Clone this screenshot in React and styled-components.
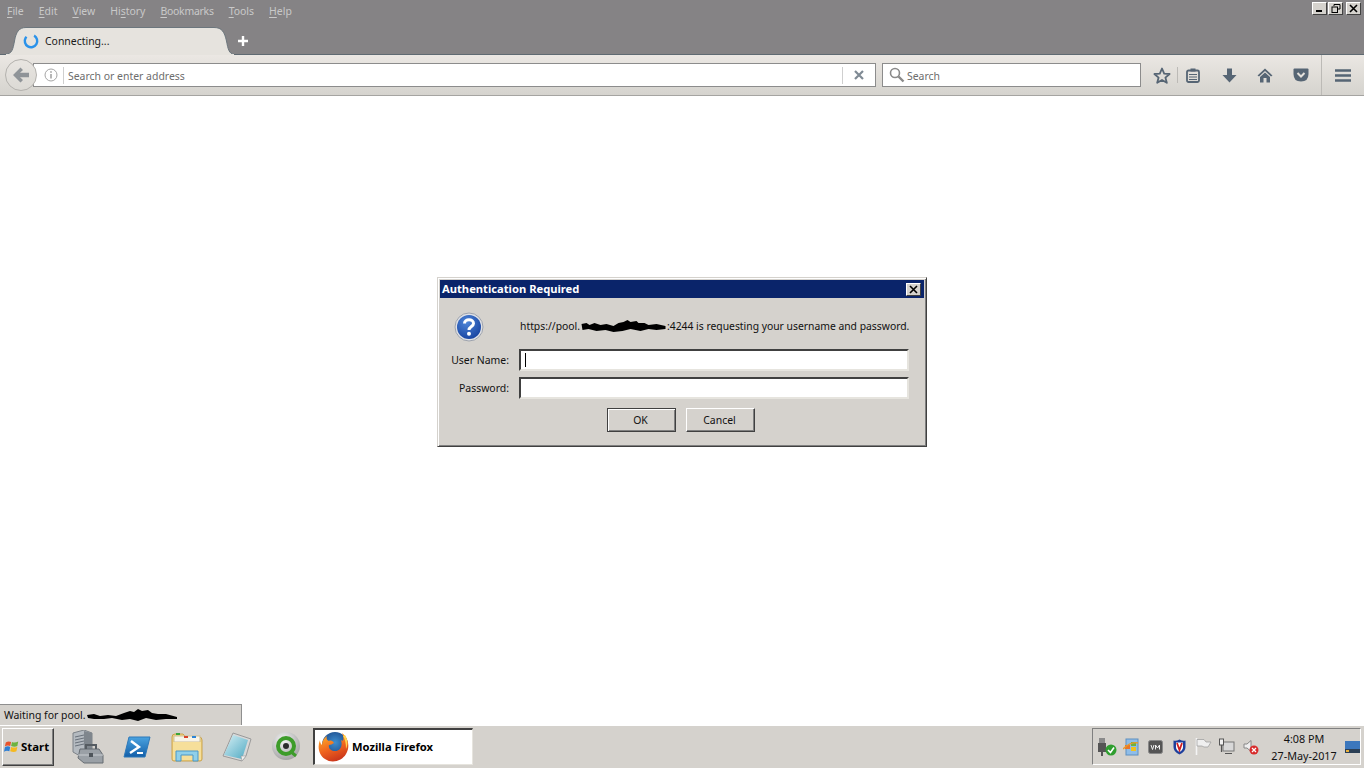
import React from 'react';
import styled, { createGlobalStyle } from 'styled-components';

const GlobalStyle = createGlobalStyle`
  html, body { margin: 0; padding: 0; background: #fff; }
  * { box-sizing: border-box; }
  body { font-family: 'Noto Sans', 'Liberation Sans', sans-serif; font-size: 10.45px; }
`;

const chrome = '#d5d2cd';

const Page = styled.div`
  width: 1364px;
  height: 768px;
  display: flex;
  flex-direction: column;
  overflow: hidden;
  position: relative;
`;

const TitleArea = styled.div`
  height: 55px;
  flex: none;
  background: #858385;
  border-bottom: 1px solid #5f6a72;
  display: flex;
  flex-direction: column;
`;

const MenuRow = styled.div`
  height: 27px;
  display: flex;
  justify-content: space-between;
  align-items: flex-start;
  padding: 0 3px 0 7px;
`;

const Menu = styled.nav`
  display: flex;
  gap: 15px;
  height: 22px;
  align-items: center;
`;

const MenuItem = styled.span`
  color: #c9c9c9;
  letter-spacing: ${p => (p.$tight ? '-0.25px' : 'normal')};
  u { text-decoration-thickness: 1px; text-underline-offset: 2px; }
`;

const WindowButtons = styled.div`
  display: flex;
  gap: 1px;
  padding-top: 2px;
`;

const WindowButton = styled.button`
  width: 15px;
  height: 13px;
  padding: 0;
  display: flex;
  align-items: center;
  justify-content: center;
  background: ${chrome};
  border: 1px solid;
  border-color: #fff #404040 #404040 #fff;
  margin-left: ${p => p.$offset || 0}px;
`;

const TabRow = styled.div`
  height: 27px;
  padding-left: 6px;
  display: flex;
  align-items: center;
`;

const Tab = styled.div`
  width: 228px;
  height: 28px;
  position: relative;
  display: flex;
  align-items: center;
  padding: 0 12px 0 17px;
  margin-bottom: -1px;
  z-index: 1;
`;

const TabShape = styled.svg`
  position: absolute;
  left: 0;
  top: 0;
`;

const TabSpinner = styled.svg`
  position: relative;
  flex: none;
`;

const TabTitle = styled.span`
  position: relative;
  flex: 1;
  margin-left: 6px;
  color: #1a1a1a;
`;

const NewTab = styled.svg`
  margin-left: 2px;
`;

const Toolbar = styled.div`
  height: 41px;
  flex: none;
  display: flex;
  align-items: center;
  background: linear-gradient(#ebe7e3, #d5d3ce);
  border-bottom: 1px solid #a5a4a1;
  padding-left: 5px;
`;

const BackButton = styled.div`
  width: 32px;
  height: 32px;
  border-radius: 50%;
  flex: none;
  display: flex;
  align-items: center;
  justify-content: center;
  background: linear-gradient(#e8e5e1, #dcdad5);
  border: 1px solid #b4b2ae;
  position: relative;
  z-index: 1;
`;

const Field = styled.div`
  height: 24px;
  background: #fff;
  border: 1px solid #8c8c8c;
  display: flex;
  align-items: center;
  flex: none;
  width: ${p => p.$width}px;
  margin-left: ${p => p.$offset}px;
`;

const Placeholder = styled.span`
  color: #6d6d6d;
  flex: 1;
  padding-top: 1px;
`;

const InfoWrap = styled.div`
  width: 30px;
  height: 17px;
  flex: none;
  padding-left: 10px;
  display: flex;
  align-items: center;
  border-right: 1px solid #cfcfcf;
  margin-right: 4px;
`;

const ClearWrap = styled.div`
  width: 33px;
  height: 17px;
  flex: none;
  display: flex;
  align-items: center;
  justify-content: center;
  border-left: 1px solid #cfcfcf;
`;

const SearchIcon = styled.svg`
  margin: 0 2px 0 6px;
  flex: none;
`;

const ToolGroup = styled.div`
  display: flex;
  align-items: center;
  gap: 6px;
  margin-left: ${p => p.$offset || 0}px;
`;

const ToolButton = styled.div`
  width: 30px;
  height: 24px;
  flex: none;
  display: flex;
  align-items: center;
  justify-content: center;
`;

const ToolSep = styled.div`
  width: 1px;
  height: ${p => p.$height}px;
  background: #bcbab6;
  flex: none;
  margin-left: ${p => p.$offset || 0}px;
`;

const BurgerButton = styled(ToolButton)`
  width: 42px;
`;

const Content = styled.main`
  flex: 1;
  background: #fff;
  padding: 181px 0 0 437px;
`;

const Dialog = styled.section`
  width: 490px;
  height: 170px;
  background: ${chrome};
  border: 1px solid;
  border-color: ${chrome} #404040 #404040 ${chrome};
  box-shadow: inset 1px 1px 0 #fff, inset -1px -1px 0 #808080;
  padding: 2px;
  display: flex;
  flex-direction: column;
`;

const DialogTitle = styled.header`
  height: 18px;
  background: #0a246a;
  color: #fff;
  font-weight: 700;
  font-size: 11.2px;
  display: flex;
  align-items: center;
  justify-content: space-between;
  padding: 0 2px 0 2px;
`;

const TitleText = styled.span`
  padding-bottom: 2px;
`;

const DialogClose = styled(WindowButton)`
  margin-right: 1px;
`;

const DialogBody = styled.div`
  flex: 1;
  display: grid;
  grid-template-columns: 69px 390px;
  grid-template-rows: 33px 22px 22px auto;
  row-gap: 6px;
  padding: 12px 0 0 10px;
  align-content: start;
`;

const MessageIcon = styled.svg`
  justify-self: start;
  align-self: center;
  margin-left: 4px;
`;

const Message = styled.p`
  margin: 0;
  padding: 0 0 2px 1px;
  align-self: center;
  color: #111;
  font-size: 10.35px;
  white-space: nowrap;
  display: flex;
  align-items: center;
`;

const Scribble = styled.svg`
  flex: none;
`;

const FieldLabel = styled.label`
  justify-self: end;
  align-self: center;
  padding-right: 10px;
  color: #111;
  white-space: nowrap;
`;

const Input = styled.div`
  height: 22px;
  background: #fff;
  border: 2px solid;
  border-color: #404040 #e6e4de #e6e4de #404040;
  padding-left: 4px;
  display: flex;
  align-items: center;
`;

const Caret = styled.span`
  width: 1px;
  height: 14px;
  background: #000;
`;

const ButtonRow = styled.div`
  grid-column: 1 / 3;
  display: flex;
  justify-content: center;
  gap: 10px;
  padding: 3px 0 0 0;
  margin-left: 3px;
`;

const DialogButton = styled.button`
  width: 69px;
  height: 24px;
  background: ${chrome};
  font: inherit;
  color: #111;
  padding: 0 2px 0 0;
  border: 1px solid;
  border-color: ${p => (p.$primary ? '#404040' : '#fff #404040 #404040 #fff')};
  box-shadow: ${p => (p.$primary ? 'inset 1px 1px 0 #fff, inset -1px -1px 0 #808080' : 'inset -1px -1px 0 #808080')};
`;

const StatusBar = styled.div`
  position: absolute;
  left: 0;
  bottom: 43px;
  width: 242px;
  height: 21px;
  background: ${chrome};
  border-top: 1px solid #8f8f8f;
  border-right: 1px solid #8f8f8f;
  padding-left: 4px;
  display: flex;
  align-items: center;
  color: #111;
`;

const Taskbar = styled.footer`
  height: 43px;
  flex: none;
  background: ${chrome};
  border-top: 1px solid #fff;
  padding: 2px 3px 2px 2px;
  display: flex;
  align-items: stretch;
  position: relative;
`;

const StartButton = styled.button`
  width: 52px;
  background: ${chrome};
  border: 1px solid;
  border-color: #fff #404040 #404040 #fff;
  box-shadow: inset -1px -1px 0 #808080;
  padding: 0 0 2px 1px;
  display: flex;
  align-items: center;
  gap: 1px;
  color: #000;
  font: inherit;
  font-weight: 700;
  font-size: 11.4px;
`;

const QuickLaunch = styled.div`
  margin-left: 9px;
  display: grid;
  grid-template-columns: repeat(5, 49.6px);
  justify-items: center;
  align-items: center;
`;

const TaskButton = styled.div`
  width: 160px;
  height: 37px;
  margin-left: 2px;
  background: #fff;
  border: 1px solid;
  border-width: 2px 1px 1px 2px;
  border-color: #404040 #e6e4de #e6e4de #404040;
  display: flex;
  align-items: center;
  padding-left: 3px;
  gap: 2px;
  font-weight: 700;
  font-size: 11.2px;
  color: #000;
`;

const TaskLabel = styled.span`
  padding-bottom: 2px;
`;

const Tray = styled.div`
  margin-left: auto;
  width: 269px;
  height: 37px;
  border: 1px solid;
  border-color: #808080 #fff #fff #808080;
  display: flex;
  align-items: center;
  padding-left: 2px;
`;

const TrayCell = styled.div`
  width: 24px;
  flex: none;
  display: flex;
  align-items: center;
  justify-content: center;
`;

const Clock = styled.div`
  width: 82px;
  flex: none;
  text-align: center;
  color: #111;
  font-size: 10.8px;
  line-height: 17px;
`;

const slate = '#566574';

const ArrowBack = () => (
  <svg width="18" height="16" viewBox="0 0 18 16">
    <path d="M8.5 .5 L1 8 L8.5 15.5 L11 13 L8 10.2 H17 V5.8 H8 L11 3 Z" fill="#8f9498" />
  </svg>
);

const InfoIcon = () => (
  <svg width="14" height="14" viewBox="0 0 14 14">
    <circle cx="7" cy="7" r="6" fill="none" stroke="#a5a5a5" />
    <rect x="6.2" y="6" width="1.6" height="4.5" fill="#a5a5a5" />
    <rect x="6.2" y="3.2" width="1.6" height="1.6" fill="#a5a5a5" />
  </svg>
);

const CrossIcon = ({ color = '#7f8a94', size = 10 }) => (
  <svg width={size} height={size} viewBox="0 0 10 10">
    <path d="M1 1 L9 9 M9 1 L1 9" stroke={color} strokeWidth="2.2" />
  </svg>
);

const StarIcon = () => (
  <svg width="18" height="17" viewBox="0 0 18 17">
    <path d="M9 1.5 L11.2 6.6 L16.6 7 L12.4 10.6 L13.8 15.8 L9 13 L4.2 15.8 L5.6 10.6 L1.4 7 L6.8 6.6 Z" fill="none" stroke={slate} strokeWidth="1.8" strokeLinejoin="round" />
  </svg>
);

const ListIcon = () => (
  <svg width="14" height="15" viewBox="0 0 14 15">
    <rect x="1" y="2.5" width="12" height="11.5" rx="1.5" fill="none" stroke={slate} strokeWidth="1.8" />
    <rect x="4.5" y="0.5" width="5" height="3" fill={slate} />
    <path d="M3 6.5 H11 M3 9 H11 M3 11.5 H11" stroke={slate} strokeWidth="1.2" />
  </svg>
);

const DownloadIcon = () => (
  <svg width="15" height="15" viewBox="0 0 15 15">
    <path d="M5 0.5 H10 V7 H14.5 L7.5 14.5 L0.5 7 H5 Z" fill={slate} />
  </svg>
);

const HomeIcon = () => (
  <svg width="16" height="15" viewBox="0 0 16 15">
    <path d="M0.5 7.5 L8 0.5 L15.5 7.5 L14 8.5 L8 3 L2 8.5 Z" fill={slate} />
    <path d="M3 9 L8 4.5 L13 9 V14.5 H9.5 V10 H6.5 V14.5 H3 Z" fill={slate} />
  </svg>
);

const PocketIcon = () => (
  <svg width="16" height="14" viewBox="0 0 16 14">
    <path d="M1.5 0.5 H14.5 Q15.5 0.5 15.5 1.5 V6 Q15.5 13.5 8 13.5 Q0.5 13.5 0.5 6 V1.5 Q0.5 0.5 1.5 0.5 Z" fill={slate} />
    <path d="M4.5 5 L8 8.5 L11.5 5" fill="none" stroke="#e4e1dc" strokeWidth="2" />
  </svg>
);

const BurgerIcon = () => (
  <svg width="16" height="13" viewBox="0 0 16 13">
    <path d="M0 1.5 H16 M0 6.5 H16 M0 11.5 H16" stroke={slate} strokeWidth="2.4" />
  </svg>
);

const QuestionIcon = () => (
  <MessageIcon width="30" height="30" viewBox="0 0 30 30">
    <defs>
      <radialGradient id="q" cx="0.4" cy="0.3" r="0.8">
        <stop offset="0" stopColor="#4f86d8" />
        <stop offset="1" stopColor="#133e9c" />
      </radialGradient>
    </defs>
    <circle cx="15" cy="15" r="14" fill="#dfe1e6" stroke="#9ea3ad" />
    <circle cx="15" cy="15" r="12" fill="url(#q)" />
    <path d="M10.5 11.5 C10.5 6.5 19.5 6.5 19.5 11.5 C19.5 14.5 15 14.5 15 18" fill="none" stroke="#fff" strokeWidth="3" />
    <circle cx="15" cy="21.8" r="2" fill="#fff" />
  </MessageIcon>
);

const ToolboxIcon = () => (
  <svg width="32" height="34" viewBox="0 0 32 34">
    <path d="M1 3 L12 0 L20 3 V22 L8 26 L1 22 Z" fill="#b4bac0" stroke="#7c8288" />
    <path d="M3 7 L12 5 M3 10 L12 8 M3 13 L12 11 M3 16 L12 14" stroke="#68707a" />
    <path d="M12 1 L20 3 V22 L12 25 Z" fill="#7f868d" />
    <path d="M8 19 H27 L31 25 V33 H12 L6 28 Z" fill="#9aa0a6" stroke="#676d73" />
    <path d="M6 25 H31" stroke="#c8ccd0" />
    <path d="M14 19 V15 H24 V19" fill="none" stroke="#565c62" strokeWidth="2" />
    <rect x="17" y="23" width="4" height="4" fill="#4f555b" />
  </svg>
);

const PowerShellIcon = () => (
  <svg width="28" height="24" viewBox="0 0 28 24">
    <defs>
      <linearGradient id="ps" x1="0" y1="0" x2="0" y2="1">
        <stop offset="0" stopColor="#4aa3e0" />
        <stop offset="1" stopColor="#125ea8" />
      </linearGradient>
    </defs>
    <path d="M6 2 H27 L22 22 H1 Z" fill="url(#ps)" stroke="#2d78b8" strokeLinejoin="round" />
    <path d="M8 6 L16 12 L7 18" fill="none" stroke="#fff" strokeWidth="2.4" />
    <path d="M14 18 H20" stroke="#fff" strokeWidth="2" />
  </svg>
);

const FolderIcon = () => (
  <svg width="32" height="30" viewBox="0 0 32 30">
    <path d="M1 5 Q1 2 4 2 H12 L15 5 H28 Q31 5 31 8 V27 Q31 29 29 29 H3 Q1 29 1 27 Z" fill="#f2d581" stroke="#c9a24e" />
    <rect x="3" y="4" width="26" height="6" fill="#f8f4e8" stroke="#cdbf9a" />
    <rect x="5" y="1" width="4" height="2" fill="#3aa53a" />
    <rect x="13" y="4" width="4" height="2" fill="#d8432b" />
    <rect x="21" y="4" width="4" height="2" fill="#2d84d6" />
    <path d="M2 10 H30 V28 H2 Z" fill="#f6df9a" />
    <path d="M5 19 H27 V29 H22 V23 H10 V29 H5 Z" fill="#8fd0ea" stroke="#4a97c8" />
  </svg>
);

const NotepadIcon = () => (
  <svg width="30" height="30" viewBox="0 0 30 30">
    <defs>
      <linearGradient id="np" x1="0" y1="0" x2="1" y2="1">
        <stop offset="0" stopColor="#d6f0f5" />
        <stop offset="1" stopColor="#4fa9c2" />
      </linearGradient>
    </defs>
    <path d="M11 1 L29 7 L24 24 L20 29 L1 24 Z" fill="#d8d8d8" stroke="#9a9a9a" />
    <path d="M11 3 L26 8 L20 27 L2 23 Z" fill="url(#np)" />
    <path d="M24 24 L20 29 L19 24 Z" fill="#f0f0f0" stroke="#9a9a9a" strokeWidth=".6" />
  </svg>
);

const QlikIcon = () => (
  <svg width="30" height="32" viewBox="0 0 30 32">
    <defs>
      <radialGradient id="ql" cx="0.4" cy="0.3" r="0.8">
        <stop offset="0" stopColor="#f5f5f5" />
        <stop offset="1" stopColor="#9a9a9a" />
      </radialGradient>
    </defs>
    <circle cx="15" cy="15" r="14" fill="url(#ql)" />
    <circle cx="15" cy="15" r="8" fill="none" stroke="#3d9c2a" strokeWidth="4" />
    <circle cx="15" cy="15" r="3" fill="#2c2c2c" />
    <path d="M19 20 L25 25" stroke="#3d9c2a" strokeWidth="3" />
  </svg>
);

const FirefoxIcon = () => (
  <svg width="32" height="32" viewBox="0 0 32 32">
    <defs>
      <linearGradient id="ffo" x1="0.2" y1="0" x2="0.6" y2="1">
        <stop offset="0" stopColor="#ffb52b" />
        <stop offset="0.55" stopColor="#f0641e" />
        <stop offset="1" stopColor="#c9341b" />
      </linearGradient>
      <radialGradient id="ffb" cx="0.5" cy="0.4" r="0.6">
        <stop offset="0" stopColor="#3f8fd0" />
        <stop offset="1" stopColor="#17407f" />
      </radialGradient>
    </defs>
    <circle cx="17" cy="14" r="13" fill="url(#ffb)" />
    <path d="M24 2 C31 7 32 17 28 23 C24 30 14 33 7 28 C1 24 -1 16 2 9 C2 12 3 13 4 14 C4 10 6 7 9 5 C8 8 9 9 11 10 C13 9 15 10 16 12 C14 13 13 14 11 14 C10 17 13 20 17 20 C22 20 25 15 23 9 C26 12 26 6 24 2 Z" fill="url(#ffo)" />
    <path d="M27 4 C30 9 30 14 28 18 C28 12 27 8 25 5 Z" fill="#ffd34e" />
  </svg>
);

const WindowsFlag = () => (
  <svg width="16" height="16" viewBox="0 0 18 18">
    <path d="M2 5 Q5 3 8 4.5 L7 9 Q4 7.5 1 9.5 Z" fill="#e8532b" />
    <path d="M9 4.5 Q12 6 16 4 L15 9 Q12 10.5 8 9 Z" fill="#6db33f" />
    <path d="M1 10.5 Q4 8.5 7 10 L6 15 Q3 13.5 0 15.5 Z" fill="#2f7fd3" />
    <path d="M8 10 Q11 11.5 15 10 L14 15 Q11 16.5 7 15 Z" fill="#f5b91f" />
  </svg>
);

const UsbTrayIcon = () => (
  <svg width="20" height="18" viewBox="0 0 20 18">
    <rect x="2" y="0" width="6" height="5" fill="#8a8a8a" />
    <rect x="1" y="5" width="8" height="9" fill="#555" />
    <rect x="4" y="14" width="2" height="4" fill="#555" />
    <circle cx="14" cy="12" r="5.5" fill="#2f9e2f" />
    <path d="M11 12 L13.5 14.5 L17 9.5" fill="none" stroke="#fff" strokeWidth="1.6" />
  </svg>
);

const UpdateTrayIcon = () => (
  <svg width="16" height="18" viewBox="0 0 16 18">
    <rect x="3" y="1" width="12" height="16" fill="#8fbde8" stroke="#5f8fc0" />
    <path d="M2 7 H7 V11 H2 Z" fill="#e8762b" />
    <path d="M8 4 H13 V8 H8 Z" fill="#6db33f" />
    <path d="M8 9 H13 V13 H8 Z" fill="#f0c020" />
    <path d="M0 11 Q8 3 15 5" fill="none" stroke="#e89a2b" strokeWidth="1.4" />
  </svg>
);

const VmTrayIcon = () => (
  <svg width="15" height="14" viewBox="0 0 15 14">
    <rect x="0.5" y="0.5" width="14" height="13" rx="2" fill="#555" stroke="#888" />
    <path d="M3 5 L4.5 9.5 L6 5 M7.5 9.5 V5 L9.5 8 L11.5 5 V9.5" fill="none" stroke="#eee" />
  </svg>
);

const ShieldTrayIcon = () => (
  <svg width="13" height="16" viewBox="0 0 13 16">
    <path d="M0.5 1.5 Q3 2.5 6.5 0.5 Q10 2.5 12.5 1.5 V8 Q12.5 13 6.5 15.5 Q0.5 13 0.5 8 Z" fill="#1f3f9c" />
    <path d="M3 3.5 H10 V8 Q10 11 6.5 13 Q3 11 3 8 Z" fill="#fff" />
    <path d="M4 4 L6.5 11 L9 4" fill="none" stroke="#d21f1f" strokeWidth="1.8" />
  </svg>
);

const FlagTrayIcon = () => (
  <svg width="17" height="17" viewBox="0 0 17 17">
    <path d="M1.5 0 V17" stroke="#f4f4f4" strokeWidth="1.6" />
    <path d="M2 1.5 H9 L11 4 H16 L13 9 H9 L7 8 H2 Z" fill="#efefef" stroke="#9a9a9a" strokeWidth="0.7" />
  </svg>
);

const NetworkTrayIcon = () => (
  <svg width="16" height="17" viewBox="0 0 16 17">
    <rect x="4" y="4" width="11" height="9" fill="#d8d8d8" stroke="#777" />
    <rect x="0.5" y="1" width="4" height="6" fill="#f0f0f0" stroke="#555" />
    <path d="M2.5 7 V14 M6 15.5 H13" stroke="#555" strokeWidth="1.2" />
  </svg>
);

const SpeakerTrayIcon = () => (
  <svg width="16" height="16" viewBox="0 0 16 16">
    <path d="M1 5 H4 L8 1.5 V12.5 L4 9 H1 Z" fill="#eee" stroke="#888" />
    <circle cx="11" cy="11" r="4.5" fill="#d82c2c" />
    <path d="M9 9 L13 13 M13 9 L9 13" stroke="#fff" strokeWidth="1.3" />
  </svg>
);

const DisplayIcon = () => (
  <svg width="15" height="12" viewBox="0 0 15 12">
    <rect x="0" y="0" width="15" height="12" fill="#3b77bd" />
    <rect x="0" y="8" width="15" height="4" fill="#2b3f55" />
    <rect x="1" y="9" width="3" height="2" fill="#e8b03a" />
  </svg>
);

const App = () => (
  <Page>
    <GlobalStyle />
    <TitleArea>
      <MenuRow>
        <Menu>
          <MenuItem><u>F</u>ile</MenuItem>
          <MenuItem><u>E</u>dit</MenuItem>
          <MenuItem><u>V</u>iew</MenuItem>
          <MenuItem>Hi<u>s</u>tory</MenuItem>
          <MenuItem $tight><u>B</u>ookmarks</MenuItem>
          <MenuItem><u>T</u>ools</MenuItem>
          <MenuItem><u>H</u>elp</MenuItem>
        </Menu>
        <WindowButtons>
          <WindowButton aria-label="Minimize">
            <svg width="9" height="9" viewBox="0 0 9 9"><rect x="1" y="6" width="6" height="2" fill="#000" /></svg>
          </WindowButton>
          <WindowButton aria-label="Restore">
            <svg width="10" height="9" viewBox="0 0 10 9">
              <path d="M3 .5 H9 V5 H7 M3 .5 V2" fill="none" stroke="#000" />
              <rect x="1" y="3" width="5.5" height="5.5" fill="none" stroke="#000" />
            </svg>
          </WindowButton>
          <WindowButton aria-label="Close" $offset={2}>
            <svg width="9" height="9" viewBox="0 0 9 9"><path d="M1 1 L8 8 M8 1 L1 8" stroke="#000" strokeWidth="1.6" /></svg>
          </WindowButton>
        </WindowButtons>
      </MenuRow>
      <TabRow>
        <Tab>
          <TabShape width="228" height="28" viewBox="0 0 228 28">
            <path d="M0 27 C6 27 7 22 8.5 14 C10 5 13 .5 20 .5 L208 .5 C216 .5 218.5 5 220.5 14 C222 22 223 27 228 27 V28 H0 Z" fill="#e6e3de" stroke="#6c767d" strokeWidth="1" />
            <rect x="0" y="27" width="228" height="1" fill="#e6e3de" />
          </TabShape>
          <TabSpinner width="16" height="16" viewBox="0 0 16 16">
            <circle cx="8" cy="8" r="6.2" fill="none" stroke="#2a92ea" strokeWidth="2.4" strokeDasharray="30 9" transform="rotate(-60 8 8)" />
          </TabSpinner>
          <TabTitle>Connecting...</TabTitle>
          <CrossIcon color="#80868c" />
        </Tab>
        <NewTab width="14" height="14" viewBox="0 0 14 14">
          <path d="M7 2 V12 M2 7 H12" stroke="#fff" strokeWidth="2.4" />
        </NewTab>
      </TabRow>
    </TitleArea>

    <Toolbar>
      <BackButton><ArrowBack /></BackButton>
      <Field $width={843} $offset={-4}>
        <InfoWrap><InfoIcon /></InfoWrap>
        <Placeholder>Search or enter address</Placeholder>
        <ClearWrap><CrossIcon /></ClearWrap>
      </Field>
      <Field $width={259} $offset={6}>
        <SearchIcon width="16" height="16" viewBox="0 0 16 16">
          <circle cx="6" cy="6" r="4.5" fill="none" stroke="#8a8a8a" strokeWidth="1.6" />
          <path d="M9.5 9.5 L14.5 14.5" stroke="#8a8a8a" strokeWidth="2.4" />
        </SearchIcon>
        <Placeholder>Search</Placeholder>
      </Field>
      <ToolGroup $offset={6}>
        <ToolButton><StarIcon /></ToolButton>
      </ToolGroup>
      <ToolSep $height={16} />
      <ToolGroup>
        <ToolButton><ListIcon /></ToolButton>
        <ToolButton><DownloadIcon /></ToolButton>
        <ToolButton><HomeIcon /></ToolButton>
        <ToolButton><PocketIcon /></ToolButton>
      </ToolGroup>
      <ToolSep $height={40} $offset={5} />
      <BurgerButton><BurgerIcon /></BurgerButton>
    </Toolbar>

    <Content>
      <Dialog>
        <DialogTitle>
          <TitleText>Authentication Required</TitleText>
          <DialogClose aria-label="Close">
            <svg width="9" height="9" viewBox="0 0 9 9"><path d="M1 1 L8 8 M8 1 L1 8" stroke="#000" strokeWidth="1.6" /></svg>
          </DialogClose>
        </DialogTitle>
        <DialogBody>
          <QuestionIcon />
          <Message>
            https://pool.
            <Scribble width="87" height="12" viewBox="0 0 86 12">
              <path d="M1 4 L6 3 L9 5 L14 3 L20 5 L26 4 L33 6 L38 3 L43 2 L47 0 L50 2 L56 1 L58 3 L64 3 L68 5 L76 4 L85 6 L85 9 L76 10 L68 9 L60 11 L50 9 L42 11 L33 12 L25 10 L16 11 L8 9 L2 10 Z" fill="#000" />
            </Scribble>
            :4244 is requesting your username and password.
          </Message>
          <FieldLabel>User Name:</FieldLabel>
          <Input><Caret /></Input>
          <FieldLabel>Password:</FieldLabel>
          <Input />
          <ButtonRow>
            <DialogButton $primary>OK</DialogButton>
            <DialogButton>Cancel</DialogButton>
          </ButtonRow>
        </DialogBody>
      </Dialog>
    </Content>

    <StatusBar>
      Waiting for pool.
      <Scribble width="92" height="14" viewBox="0 0 92 14">
        <path d="M1 7 L8 6 L14 8 L22 7 L30 8 L38 5 L44 3 L48 4 L52 1 L56 3 L62 2 L66 5 L72 6 L80 6 L91 9 L91 11 L80 11 L70 12 L60 10 L52 13 L44 11 L36 12 L26 10 L18 11 L8 11 L2 10 Z" fill="#000" />
      </Scribble>
    </StatusBar>

    <Taskbar>
      <StartButton><WindowsFlag />Start</StartButton>
      <QuickLaunch>
        <ToolboxIcon />
        <PowerShellIcon />
        <FolderIcon />
        <NotepadIcon />
        <QlikIcon />
      </QuickLaunch>
      <TaskButton><FirefoxIcon /><TaskLabel>Mozilla Firefox</TaskLabel></TaskButton>
      <Tray>
        <TrayCell><UsbTrayIcon /></TrayCell>
        <TrayCell><UpdateTrayIcon /></TrayCell>
        <TrayCell><VmTrayIcon /></TrayCell>
        <TrayCell><ShieldTrayIcon /></TrayCell>
        <TrayCell><FlagTrayIcon /></TrayCell>
        <TrayCell><NetworkTrayIcon /></TrayCell>
        <TrayCell><SpeakerTrayIcon /></TrayCell>
        <Clock>4:08 PM<br />27-May-2017</Clock>
        <DisplayIcon />
      </Tray>
    </Taskbar>
  </Page>
);

export default App;
